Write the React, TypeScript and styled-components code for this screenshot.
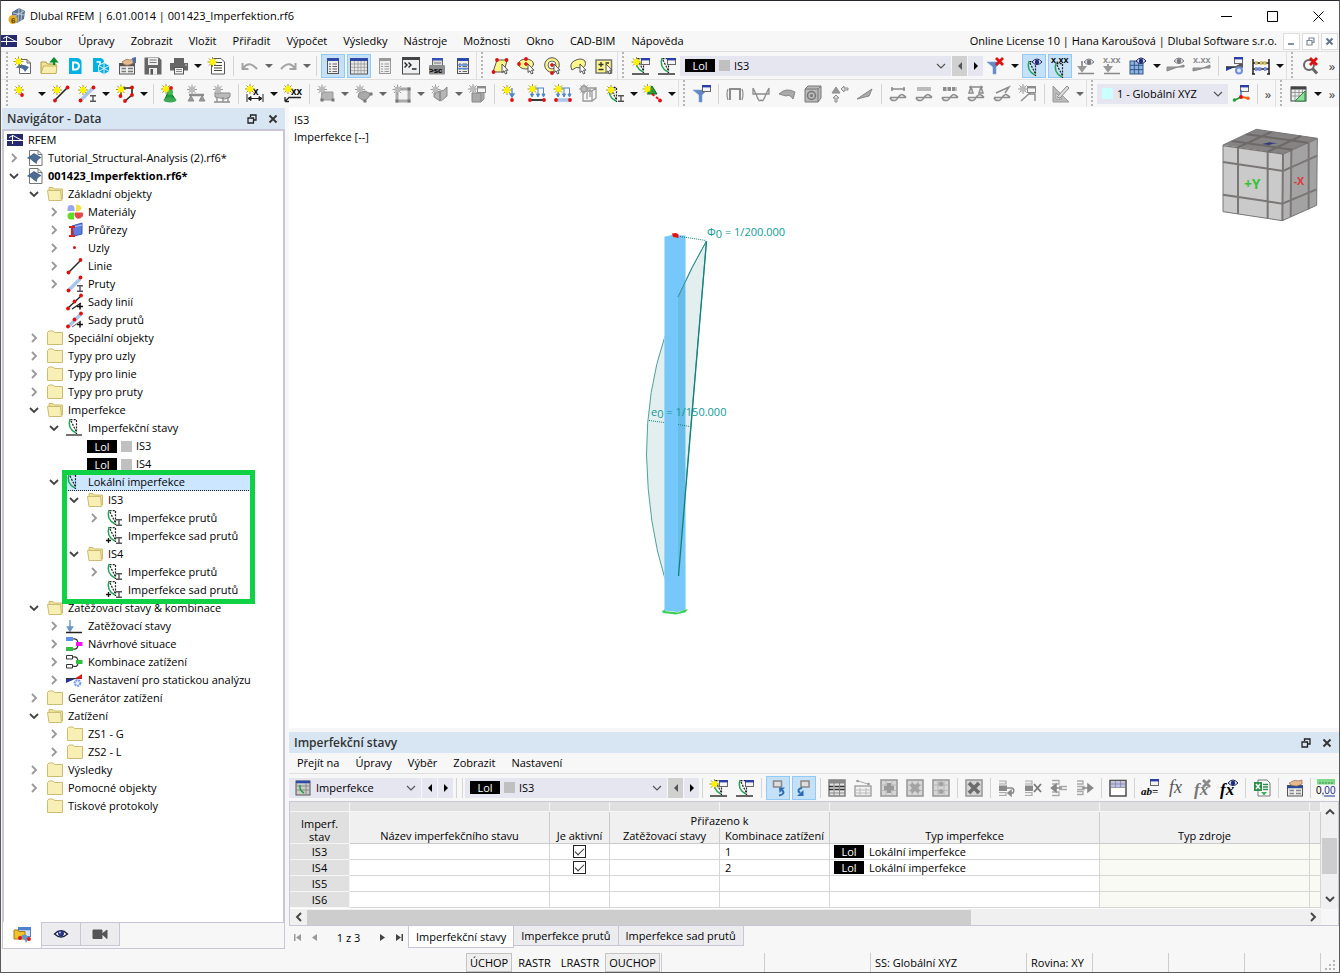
import React from "react";
import styled, { createGlobalStyle, css } from "styled-components";

const Global = createGlobalStyle`
  *, *::before, *::after { box-sizing: border-box; }
  body { margin: 0; }
  body, button, select, input, table { font-family: "Open Sans", "Noto Sans", sans-serif; font-size: 11px; color: #000; }
  button { padding: 0; border: 0; background: none; }
  ul { list-style: none; margin: 0; padding: 0; }
`;

const c = {
  bar: "#f7f7f7",
  line: "#e0e0e0",
  frame: "#c9c7d5",
  field: "#e6e6f1",
  title: "#d8e6f3",
  hot: "#c5e1f8",
  hotLine: "#93c9f5",
  g: "#8c8c8c",
  red: "#e01010",
  yel: "#fff68a",
  lb: "#a9c6ea",
  grn: "#1f9d3a",
};

/* ---------- icon primitives ---------- */

type P = { x?: number; y?: number; g?: boolean };

const Star = ({ x = 5, y = 5, g }: P) => (
  <g transform={`translate(${x} ${y})`}>
    <path d="M-5 0H5M0-5V5M-3.6-3.6L3.6 3.6M-3.6 3.6L3.6-3.6" stroke={g ? "#999" : "#a89a10"} strokeWidth="1" />
    <circle r="3" fill={g ? "#bbb" : "#fff200"} />
  </g>
);
const Dot = ({ x = 0, y = 0, g }: P) => <circle cx={x} cy={y} r="1.9" fill={g ? c.g : c.red} />;
const Win = ({ x = 8, y = 1, g }: P) => (
  <g>
    <rect x={x + 0.5} y={y + 0.5} width="8" height="6" fill="#f4f4f4" stroke={g ? c.g : "#666"} />
    <rect x={x} y={y} width="9" height="2.4" fill={g ? c.g : "#2b3ea8"} />
  </g>
);
const Eye = ({ x = 10, y = 4, g }: P) => (
  <g transform={`translate(${x} ${y})`}>
    <path d="M-5 0Q0-6 5 0Q0 5-5 0Z" fill="#dfe3f2" stroke={g ? "#777" : "#1c2456"} />
    <circle r="2.2" fill={g ? "#777" : "#1c2a80"} />
  </g>
);
const Cursor = ({ x = 11, y = 7 }: P) => (
  <path transform={`translate(${x} ${y})`} d="M0 0V8.500L2 6.800L3.400 10L5 9.200L3.600 6.200H6Z" fill="#fff" stroke="#444" strokeWidth=".9" />
);
const Bow = ({ x = 0, y = 0 }: P) => (
  <g transform={`translate(${x} ${y})`} fill="none">
    <path d="M2 0C0 6 2 11 8 14" stroke="#25a35a" strokeWidth="1.500" />
    <path d="M2.500.700H9M8.500 1V15M3 2L8 12" stroke="#222" strokeWidth="1.200" strokeDasharray="2 1.200" />
  </g>
);
const Beam = ({ x = 11, y = 10 }: P) => (
  <path transform={`translate(${x} ${y})`} d="M0 .7H6M3 1V6.500M0 6.300H6" stroke="#555" strokeWidth="1.400" />
);
const Cross = ({ x = 9, y = 0, g }: P) => (
  <path transform={`translate(${x} ${y})`} d="M1 1L8 8M8 1L1 8" stroke={g ? "#8a8a8a" : c.red} strokeWidth="2.800" />
);
const Sq = ({ x = 0, y = 0 }: P) => <rect x={x - 1.5} y={y - 1.5} width="3" height="3" fill="#777" />;
const Funnel = () => <path d="M0 5H14L9 10V17H6V10Z" fill="#6189c6" stroke="#7fa3d8" strokeWidth=".6" />;
const Sheet = ({ g }: P) => (
  <g>
    <rect x="3.500" y="1.500" width="11" height="15" fill="#eee" stroke={g ? "#999" : "#555"} />
    <rect x="3" y="1" width="12" height="3" fill={g ? "#999" : "#2f49a8"} />
    <path d="M5 7H7M5 9.500H7M5 12H7M5 14.500H7M8.500 7H13M8.500 9.500H13M8.500 12H13M8.500 14.500H13" stroke={g ? "#999" : "#666"} strokeWidth="1.200" />
  </g>
);
const SmallRes = ({ top }: { top: React.ReactNode }) => (
  <g fill="none" stroke={c.g} strokeWidth="1.500">
    {top}
    <path d="M1 12.500H17M1 12.500Q2 16 6 15.500Q8 15 9 12.500Q12 8.500 14 10Q16 11 17 12.500" />
  </g>
);
const GridBox = ({ children }: { children?: React.ReactNode }) => (
  <g>
    <rect x="1" y="1" width="16" height="16" fill="#d6d6d6" stroke="#9a9a9a" strokeWidth="1.600" />
    <path d="M1 6H17M1 11.500H17M6 1V17M12 1V17" stroke="#b0b0b0" strokeWidth=".8" />
    {children}
  </g>
);
const Rows = ({ children }: { children?: React.ReactNode }) => (
  <g>
    <path d="M1 2H8V5H1M1 13.500H8V16.500H1" fill="#eee" stroke="#aaa" strokeWidth="1.200" />
    <rect x="1" y="6.500" width="8" height="5.500" fill="#8a8a8a" />
    {children}
  </g>
);
const Surface = () => <path d="M1.500 9L8 4.500L15 8.500L12.500 10Q10 12 10.500 14.500L7 12Q5 9.500 1.500 9Z" fill="#4b6c95" stroke="#2f4a6d" strokeWidth=".6" />;

const icons: Record<string, React.ReactNode> = {
  app: <g><path d="M4 5L11 1L17 4L16 12L9 16L4 12Z" fill="#5c7391" /><path d="M11 1L10 15M14 2.500L13 14M5 6L16 8M5 10L16 4" stroke="#c7d4e3" strokeWidth=".8" /><circle cx="5" cy="12.500" r="4.500" fill="#e0ad2d" /><text x="3" y="15.500" fontSize="8" fontWeight="700" fill="#604600">6</text></g>,
  rfem: <g><rect x="1" y="3" width="16" height="12" fill="#27296f" /><path d="M1 9.500H17M6.500 4V13M3 6.500L7 4.500L16 9.500" stroke="#fff" strokeWidth="1" fill="none" /></g>,
  newModel: <g><path d="M5.500 2.500H13L16.500 6V16.500H5.500Z" fill="#fff" stroke="#666" /><path d="M13 2.500V6H16.500" fill="none" stroke="#666" /><path d="M2 11Q6 5 15 10L11 15Q9 10 2 11Z" fill="#4b6c95" /><Star x={4.5} y={4.5} /></g>,
  open: <g><path d="M1 16V5H6L7.500 7H16V16Z" fill="#f3e496" stroke="#a99a45" /><path d="M3.500 9H17L16 16.500H1Z" fill="#f8efae" stroke="#b9aa55" strokeWidth=".8" /><path d="M14 8V2M11.500 4.500L14 1.500L16.500 4.500Z" stroke="#0a8d2c" strokeWidth="2" fill="#0a8d2c" /></g>,
  cloudC: <g><path d="M3 1H12Q15.500 2 15.500 5V17H3Z" fill="#00b2e3" /><path d="M12 5.500H9.500A3.500 3.500 0 0 0 9.500 12.500H12Z" fill="none" stroke="#fff" strokeWidth="2" transform="matrix(-1 0 0 1 19 0)" /></g>,
  cloudNet: <g><path d="M1 1H9Q12 2 12 5V15H1Z" fill="#00b2e3" /><path d="M4.500 5H8V9" fill="none" stroke="#fff" strokeWidth="1.600" /><path d="M12 5.500L17.500 8.500V14.500L12 17.500L6.500 14.500V8.500Z" fill="#0fa9dc" stroke="#e9f8fd" strokeWidth=".9" /><path d="M12 5.500V17.500M6.500 8.500L17.500 14.500M17.500 8.500L6.500 14.500" stroke="#e9f8fd" strokeWidth=".9" /></g>,
  hand: <g><rect x="1.500" y="6.500" width="15" height="10.500" fill="#eee" stroke="#555" /><path d="M1 8H17" stroke="#555" strokeWidth="2.500" /><path d="M3.500 11.500H8M3.500 14.500H8M10 11.500H15M10 14.500H15" stroke="#777" strokeWidth="1.500" /><path d="M4 5Q8 1 12 3L16 1.500V6L11 8Q6 9 4 5Z" fill="#e6b98e" stroke="#94694a" strokeWidth=".7" /><path d="M14 1L18 0V6L15 6.500Z" fill="#4d6f9b" /></g>,
  handPanel: <g><rect x="1.500" y="6.500" width="15" height="10.500" fill="#eee" stroke="#555" /><path d="M1 8H17" stroke="#2b4a9a" strokeWidth="2.500" /><path d="M3.500 11.500H8M3.500 14.500H8M10 11.500H15M10 14.500H15" stroke="#888" strokeWidth="1.300" /><path d="M3 4.500Q8 0 12 2L16 1V5L11 7Q6 7.500 3 4.500Z" fill="#e6b98e" stroke="#94694a" strokeWidth=".7" /></g>,
  save: <g><path d="M.500.500H15L17.500 3V17.500H.500Z" fill="#666" /><rect x="4" y="1" width="10" height="7" fill="#eee" /><path d="M5.500 3H12.500M5.500 5.500H12.500" stroke="#777" /><rect x="5" y="11" width="8" height="6.500" fill="#eee" /><rect x="6.500" y="12" width="2.500" height="5.500" fill="#555" /></g>,
  print: <g><rect x="4" y="1" width="10" height="5" fill="#666" /><path d="M0 6H18V13.500H0Z" fill="#666" /><circle cx="16" cy="8" r=".8" fill="#eee" /><rect x="4.500" y="10.500" width="9" height="6.500" fill="#f3f3f3" stroke="#555" /><path d="M6 12.500H12M6 14.500H12" stroke="#888" /></g>,
  report: <g><path d="M5.500 1.500H13L16.500 5V17H3.500V6" fill="#fff" stroke="#555" /><path d="M8 5.500H14M6 8.500H14M6 11H14M6 13.500H14" stroke="#444" strokeWidth="1.200" /><Star x={4.5} y={5} /></g>,
  undo: <path d="M1.500 6V12H7.500M2.500 11Q8 3 16 12" fill="none" stroke="#a3a3a3" strokeWidth="2" />,
  redo: <path d="M16.500 6V12H10.500M15.500 11Q10 3 2 12" fill="none" stroke="#a3a3a3" strokeWidth="2" />,
  list: <Sheet />,
  listGrey: <Sheet g />,
  grid: <g><rect x=".500" y="1.500" width="17" height="15.500" fill="#e8e8e8" stroke="#555" /><rect y="1" width="18" height="3" fill="#2f49a8" /><path d="M1 7H17M1 10.300H17M1 13.600H17M4.500 4V17M8 4V17M11 4V17M14.300 4V17" stroke="#999" strokeWidth=".8" /></g>,
  console: <g><rect x=".500" y=".500" width="17" height="16.500" fill="#eef0f2" stroke="#444" /><path d="M0 1.500H18" stroke="#444" strokeWidth="3" /><path d="M2.500 5.500L5 8L2.500 10.500M6.500 5.500L9 8L6.500 10.500M10 12H14.500" fill="none" stroke="#222" strokeWidth="1.400" /></g>,
  script: <g><rect x="4.500" y="1.500" width="10" height="9" fill="#ddd" stroke="#666" /><rect x="4" y="1" width="11" height="2.500" fill="#3951b5" /><path d="M6 6H13" stroke="#777" /><rect x="1" y="8" width="16" height="9.500" rx="1" fill="#8e8e8e" /><text x="1" y="16" fontSize="8" fontWeight="700" fill="#000">&gt;sc</text></g>,
  listBlue: <g><Sheet /><path d="M4 8H14M4 11.500H14" stroke="#5a87d6" strokeWidth="1.500" /></g>,
  selPoly: <g><path d="M2 15L6 3H16L13 15Z" fill={c.yel} stroke="#555" /><Dot x={2.5} y={15} /><Dot x={6} y={3} /><Dot x={15.500} y={3} /><Cursor /></g>,
  selEll: <g><ellipse cx="9" cy="7" rx="7.500" ry="5" fill={c.yel} stroke="#555" /><Dot x={9} y={2} /><Dot x={2} y={7} /><path d="M7 7H11M9 5V9" stroke={c.red} strokeWidth="1.500" /><Cursor /></g>,
  selRing: <g><circle cx="9" cy="8" r="7.300" fill={c.yel} stroke="#555" /><circle cx="9" cy="8" r="4" fill="#f6f6f6" stroke="#666" /><path d="M7 8H11M9 6V10" stroke={c.red} strokeWidth="1.600" /><Dot x={9} y={16} /><Cursor /></g>,
  selLasso: <g><path d="M3 13Q0 7 5 4Q12 0 16 4Q18 10 12 11Q7 9 3 13Z" fill={c.yel} stroke="#555" /><Cursor /></g>,
  selPm: <g><rect x="1" y="3" width="15.500" height="13" fill={c.yel} stroke="#777" strokeWidth="1.500" /><path d="M3.500 7.500H8.500M6 5V10M3.500 12.500H8.500M10.500 6H14" stroke="#333" strokeWidth="1.300" /><Cursor /></g>,
  impNew: <g><Bow x={3} y={1} /><path d="M0 17H17" stroke="#333" strokeWidth="1.500" /><Win x={9} y={1} /><Star x={4.500} y={5} /></g>,
  impEdit: <g><Bow x={2} y={1} /><path d="M0 17H17" stroke="#333" strokeWidth="1.500" /><Win x={9} y={1} /></g>,
  filterX: <g><Funnel /><Cross x={8} y={0} /></g>,
  impEye: <g><Bow x={2} y={4} /><Eye x={12} y={5} /></g>,
  impX: <g><Bow x={3} y={6} /><text x="0" y="6" fontSize="9" fontWeight="700">x.xx</text></g>,
  loadEye: <g><path d="M5 4V13M2 10L5 14L8 10Z" stroke="#999" strokeWidth="2" fill="#999" /><path d="M1 16.500H17" stroke="#888" strokeWidth="1.500" /><Eye x={12} y={5} g /></g>,
  loadX: <g><path d="M5 7V13M2 10L5 14L8 10Z" stroke="#999" strokeWidth="2" fill="#999" /><path d="M1 16.500H17" stroke="#888" strokeWidth="1.500" /><text x="0" y="6" fontSize="9" fontWeight="700" fill="#888">x.xx</text></g>,
  gridEye: <g><rect x="1" y="4" width="13" height="13" fill="#8fb2de" stroke="#33588c" /><path d="M1 8.300H14M1 12.600H14M5.300 4V17M9.700 4V17" stroke="#33588c" /><Eye x={12} y={4} /></g>,
  resEye: <g><path d="M0 14V10H17V8L8 11Z" fill="#999" stroke="#888" /><Eye x={12} y={4} g /></g>,
  resX: <g><path d="M0 14V11H17V8L8 12Z" fill="#999" stroke="#888" /><text x="0" y="6" fontSize="9" fontWeight="700" fill="#888">x.xx</text></g>,
  calc: <g><path d="M0 14V10H9Z" fill="#2b3ea8" /><path d="M0 10H17" stroke="#333" strokeWidth="1.500" /><path d="M10 9L17 5V9Z" fill="#555" /><Win x={8} y={0} /><circle cx="13" cy="13.500" r="3" fill="#dfe8ff" stroke="#6f8fe0" strokeWidth="2" /></g>,
  abacus: <g><path d="M1 2V17M17 2V17M1 6H17M1 12H17M0 17H3M15 17H18" stroke="#222" strokeWidth="1.500" /><path d="M3 6H6M8 6H15" stroke="#d6c46a" strokeWidth="4" strokeDasharray="2.500 .800" /><path d="M3 12H10M12 12H15" stroke="#7c93e0" strokeWidth="4" strokeDasharray="2.500 .800" /></g>,
  zoomX: <g><circle cx="8" cy="8" r="5" fill="#f5f5f5" stroke="#666" strokeWidth="2" /><path d="M11.500 11.500L16 16.500" stroke="#666" strokeWidth="3" /><Cross x={8} y={0} /></g>,
  node: <g><Star x={5} y={5} /><Dot x={8} y={10} /></g>,
  line: <g><path d="M3 15L15 3" stroke="#222" strokeWidth="1.600" /><Dot x={3} y={15.500} /><Dot x={15.500} y={2.500} /><Star x={5} y={5} /></g>,
  member: <g><path d="M3 15L15 3" stroke={c.lb} strokeWidth="3.500" /><Dot x={2.500} y={15.500} /><Dot x={15.500} y={2.500} /><Star x={5} y={5} /><Beam x={12} y={10} /></g>,
  poly: <g><path d="M5 11V3H16V10L9 16" stroke="#222" strokeWidth="1.600" fill="none" /><Dot x={16} y={2.500} /><Dot x={16} y={10} /><Dot x={9} y={16} /><Dot x={4.500} y={11} /><Star x={5} y={4.500} /></g>,
  support: <g><path d="M8 5L14 14H4Z" fill={c.grn} stroke="#0c6e22" /><ellipse cx="9" cy="15" rx="6.500" ry="2.500" fill="#3da856" /><circle cx="9" cy="7" r="3" fill="#3cba54" /><Star x={5} y={4} /><Dot x={10} y={3} /></g>,
  supp2: <g><path d="M2 10H17" stroke={c.g} strokeWidth="2.500" /><path d="M4 11L7 16H1ZM15 11L18 16H12Z" fill="#999" stroke={c.g} /><Star x={5} y={4.500} g /></g>,
  supp3: <g><path d="M2 8H17V12L12 14L2 12Z" fill="#bbb" stroke={c.g} /><path d="M4 12V17M10 12V17M15 12V17M1 17H17" stroke={c.g} strokeWidth="1.300" /><Star x={5} y={4.500} g /></g>,
  dimX: <g><path d="M1 9V17M17 9V17M2 13.500H16M2 13.500L5 11.500V15.500ZM16 13.500L13 11.500V15.500Z" stroke="#222" fill="#222" /><text x="7" y="10" fontSize="10" fontWeight="700">x</text><Star x={4} y={4} /></g>,
  dimXX: <g><path d="M1 16.500L5 12.500H17M1 16.500V12M1 16.500H5" stroke="#222" fill="none" strokeWidth="1.300" /><text x="7" y="10" fontSize="10" fontWeight="700">xx</text><Star x={4} y={4} /></g>,
  surf: <g><path d="M5 7H16V15H4Z" fill="#b5b5b5" stroke="#999" /><Sq x={5} y={15} /><Sq x={16} y={15} /><Star x={5} y={4.500} g /></g>,
  surf2: <g><path d="M4 8L10 6L16 9L13 13L9 16L3 12Z" fill="#aaa" stroke="#888" /><Sq x={10} y={16} /><Sq x={16} y={9} /><Star x={5} y={4.500} g /></g>,
  opening: <g><rect x="4" y="4" width="12" height="12" fill="#f3f3f3" stroke="#aaa" strokeWidth="3" /><Sq x={4} y={16} /><Sq x={16} y={16} /><Sq x={16} y={4} /><Star x={4.500} y={4.500} g /></g>,
  wing: <g><path d="M3 8L9 6V16L3 12ZM9 6Q12 7 16 2V11Q12 15 9 16Z" fill="#b5b5b5" stroke="#888" /><Star x={4.500} y={4.500} g /></g>,
  solid: <g><path d="M3 8H12V17H3ZM12 8L15 5V14L12 17" fill="#aaa" stroke="#888" /><Win x={8} y={1} g /><Star x={4} y={4} g /></g>,
  nodeLoad: <g><path d="M10 3V11M8 9L10 12L12 9Z" stroke="#4f86cf" fill="#4f86cf" strokeWidth="1.300" /><Dot x={10} y={15} /><Star x={5} y={5} /></g>,
  lineLoad: <g><path d="M4 3H16M4 3V11M10 3V11M15.500 3V11M2.500 9L4 12L5.500 9ZM8.500 9L10 12L11.500 9ZM14 9L15.500 12L17 9Z" stroke="#4f86cf" fill="#4f86cf" /><path d="M2 15H16" stroke="#222" strokeWidth="1.800" /><Dot x={2} y={15} /><Dot x={16} y={15} /><Star x={4.500} y={4} /></g>,
  memLoad: <g><path d="M4 3H16M4 3V11M10 3V11M15.500 3V11M2.500 9L4 12L5.500 9ZM8.500 9L10 12L11.500 9ZM14 9L15.500 12L17 9Z" stroke="#4f86cf" fill="#4f86cf" /><path d="M2 15H16" stroke={c.lb} strokeWidth="3.500" /><Dot x={2} y={15} /><Dot x={16} y={15} /><Star x={4.500} y={4} /></g>,
  solidLoad: <g fill="none" stroke="#999" strokeWidth="1.300"><path d="M3 6H12V16H3ZM12 6L16 3V13L12 16M7 3H16M7 8V14M10 4V12" /><Star x={4} y={4} g /></g>,
  imp: <g><Bow x={2} y={2} /><Beam x={12} y={10} /><Star x={5} y={5} /></g>,
  nodeSup: <g><path d="M8 1L13 9H3Z" fill={c.grn} stroke="#0c6e22" /><Star x={3.500} y={4} /><path d="M8 9L16 15" stroke="#e01010" strokeWidth="2" strokeDasharray="3 2" /><Dot x={16} y={15.500} /></g>,
  filterWin: <g><Funnel /><Win x={9} y={0} /></g>,
  rDef: <g fill="none" stroke={c.g} strokeWidth="1.600"><path d="M4 15V4H14V15M3 4H15" strokeWidth="2" /><path d="M2 4Q0 9 2 15M16 4Q18 9 16 15" strokeWidth="1.200" /></g>,
  rMom: <path d="M1 3L4 9H14L17 3M1 3V9H4Q7 18 9 15Q11 18 14 9H17V3" fill="none" stroke={c.g} strokeWidth="1.300" />,
  rSurf: <path d="M1 9Q8 2 17 7L15 14Q12 9 8 11Z" fill="#aaa" stroke="#888" />,
  rSol: <g><path d="M1 4L4 1H17V13L14 17H1Z" fill="#b9b9b9" stroke="#777" /><path d="M1 4H14V17M14 4L17 1" stroke="#777" fill="none" /><circle cx="7.500" cy="10.500" r="4" fill="none" stroke="#777" strokeWidth="1.500" /><circle cx="7.500" cy="10.500" r="1.500" fill="#777" /></g>,
  rSup: <g fill="#999" stroke={c.g}><path d="M6 2L10 8H2Z" /><path d="M18 5H14V7L11 4L14 1V3H18ZM5 17V13H3L6 10L9 13H7V17Z" fill="#ddd" /></g>,
  rSec: <path d="M1 14L16 4L13 11L1 14Z" fill="#aaa" stroke="#888" />,
  r1: <SmallRes top={<path d="M2 4H16M3 2V6M15 2V6" />} />,
  r2: <SmallRes top={<path d="M2 4H16" strokeWidth="4" stroke="#bbb" />} />,
  r3: <SmallRes top={<path d="M2 4H16" strokeWidth="4" strokeDasharray="3.500 1" />} />,
  r4: <SmallRes top={<path d="M2 2H16M4 2L6 8H2ZM14 2L16 8H12Z" />} />,
  r5: <SmallRes top={<path d="M3 8L16 2L12 8" />} />,
  rNew: <g><path d="M2 16L12 7M9 9H16V16" stroke={c.g} fill="none" strokeWidth="1.400" /><Win x={8} y={1} g /><Star x={4} y={4} g /></g>,
  edit: <g><path d="M1 1V17H17ZM4 8V14H10Z" fill="#bbb" stroke="#999" fillRule="evenodd" /><path d="M5 12L15 1L17 3L8 13Z" fill="#ddd" stroke="#888" /></g>,
  axes: <g><Win x={8} y={0} /><path d="M9 5V12" stroke="#3167c9" strokeWidth="1.300" fill="none" /><path d="M9 12L3 15" stroke="#19a23a" strokeWidth="1.800" /><path d="M9 12L16 13" stroke="#f06010" strokeWidth="1.800" /><Dot x={9} y={12} /><circle cx="2.500" cy="15" r="1.800" fill="#19a23a" /><circle cx="16" cy="13.300" r="1.800" fill="#f06010" /></g>,
  gridRuler: <g><rect x="1" y="2" width="15" height="14" fill="#eee" stroke="#444" /><path d="M1 3H16" stroke="#444" strokeWidth="3" /><path d="M1 7.500H16M1 11H16M5 4V16M9 4V16M12.500 4V16" stroke="#888" strokeWidth=".8" /><path d="M15 6V16H5Z" fill="#8ee09a" stroke="#28803a" /></g>,
  /* table toolbar */
  tabIcon: <g><rect x="2" y="2" width="14" height="14" fill="#ccc" stroke="#555" /><path d="M2 3H16" stroke="#2f49a8" strokeWidth="2.500" /><path d="M2 7H16M2 11H16M12 4V16" stroke="#888" /><path d="M6 6Q5 11 10 14" stroke={c.grn} strokeWidth="1.500" fill="none" /></g>,
  syncA: <g><rect x="4.500" y="2" width="8" height="6" fill="#ddd" stroke="#888" strokeWidth="1.500" /><path d="M10 16.500Q17 15 13 11" fill="none" stroke="#2c6cb3" strokeWidth="2" /><path d="M10 8.500H16L10.500 14Z" fill="#2c6cb3" /></g>,
  syncB: <g><rect x="6" y="2" width="8" height="6" fill="#ddd" stroke="#888" strokeWidth="1.500" /><path d="M7 9Q1 10 5 14" fill="none" stroke="#2c6cb3" strokeWidth="2" /><path d="M2 17H8.500V11Z" fill="#2c6cb3" /></g>,
  tRows: <g><rect x="1" y="1" width="16" height="16" fill="#e4e4e4" stroke="#777" strokeWidth="1.400" /><rect x="1" y="1" width="16" height="3.500" fill="#888" /><path d="M1 7.500H17M1 10.500H17" stroke="#333" strokeWidth="1.600" strokeDasharray="4.500 1" /><path d="M1 14H17M6 4V17M11.500 4V17" stroke="#888" /></g>,
  tLine: <g><path d="M4 2L14 5" stroke="#aaa" /><circle cx="3.500" cy="2" r="1.300" fill="#999" /><circle cx="14.500" cy="5" r="1.300" fill="#999" /><rect x="1" y="7" width="16" height="10" fill="#f0f0f0" stroke="#999" strokeWidth="1.300" /><path d="M1 11H17M1 14H17M6 9V17M12 9V17" stroke="#bbb" /></g>,
  tPlus: <GridBox><path d="M9 4V14M4 9H14" stroke="#999" strokeWidth="4" /></GridBox>,
  tStar: <GridBox><path d="M5 5L13 13M13 5L5 13" stroke="#a3a3a3" strokeWidth="4" /></GridBox>,
  tDots: <GridBox><circle cx="9" cy="5" r="2.500" fill="#a3a3a3" /><circle cx="9" cy="12.500" r="2.500" fill="#a3a3a3" /></GridBox>,
  tDel: <GridBox><path d="M4 4L14 14M14 4L4 14" stroke="#6c6c6c" strokeWidth="3.500" /></GridBox>,
  rowA: <Rows><path d="M9 9H14Q17 10 15 14H11M13 11.500L10 14L13 16.500Z" stroke="#8a8a8a" strokeWidth="1.600" fill="none" /></Rows>,
  rowX: <Rows><path d="M10 5L17 13M17 5L10 13" stroke="#777" strokeWidth="1.800" /></Rows>,
  rowL: <g><path d="M2 1.500H9V5H2M2 13H9V16.500H2M9 7.500H17M9 10.500H17" stroke="#aaa" fill="none" strokeWidth="1.300" /><path d="M2 9H12M6 5.500L1.500 9L6 12.500Z" fill="#888" stroke="#888" strokeWidth="1.600" /></g>,
  rowR: <g><path d="M1 2H7V5H1M1 12.500H7V15.500H1M1 7.500H8V10.500H1" stroke="#aaa" fill="none" strokeWidth="1.300" /><path d="M6 9H15M12 5.500L16.500 9L12 12.500Z" fill="#888" stroke="#888" strokeWidth="1.600" /></g>,
  tView: <g><rect x="1" y="1.500" width="16" height="15.500" fill="#fff" stroke="#555" strokeWidth="1.600" /><rect x="2" y="2.500" width="14" height="6" fill="#bfbfee" /><path d="M2 8.500H16M2 5H16M6.500 2V8M11.500 2V8" stroke="#888" strokeWidth=".8" /></g>,
  abEq: <g><Win x={8} y={0} /><text x="-1" y="16" fontSize="11" fontStyle="italic" fontWeight="700" fontFamily="Liberation Serif">ab=</text></g>,
  fx: <text x="1" y="14" fontSize="18" fontStyle="italic" fill="#555" fontFamily="Liberation Serif">fx</text>,
  fxX: <g><text x="0" y="16" fontSize="17" fontStyle="italic" fill="#777" fontWeight="700" fontFamily="Liberation Serif">fx</text><Cross x={8} y={0} g /></g>,
  fxEye: <g><text x="0" y="16" fontSize="17" fontStyle="italic" fontWeight="700" fontFamily="Liberation Serif">fx</text><Eye x={13} y={4} /></g>,
  excel: <g><path d="M5 1H14L17 4V17H5Z" fill="#fff" stroke="#777" /><rect x="1" y="3" width="8" height="9" fill="#2e8f4d" /><path d="M3 5L7 10M7 5L3 10" stroke="#fff" strokeWidth="1.300" /><path d="M10 5.500H15M10 8H15M10 10.500H15" stroke="#2e8f4d" strokeWidth="1.400" /><path d="M8 13H14L11 16.500Z" fill="#3fae5e" /></g>,
  decimals: <g><rect x="0" y="0" width="18" height="5.500" fill="#7fd98b" /><path d="M3 5V3M6 5V3M9 5V3M12 5V3M15 5V3" stroke="#3a8d48" /><text x="-1" y="15" fontSize="10">0,<tspan fill="#1b2f8f">00</tspan></text><path d="M7 17H18" stroke="#1b2f8f" /></g>,
  /* tree */
  model: <g><path d="M3.500 1.500H12L16 5.500V16.500H3.500Z" fill="#fff" stroke="#777" /><path d="M12 1.500V5.500H16" fill="none" stroke="#777" /><Surface /></g>,
  folder: <path d="M1.500 15.500V3.500L3 2H7L8.500 3.500H16.500V15.500Z" fill="#f8efb4" stroke="#cbbd73" />,
  folderOpen: <g><path d="M3 14V2.500H7L8.500 4H16.500V14Z" fill="#efe093" stroke="#cbbd73" /><path d="M1.500 5.500H14.500L15.500 15.500H3Z" fill="#f8efb4" stroke="#cbbd73" /></g>,
  materials: <g><path d="M1.500 6A3.500 4 0 0 1 8.500 6V8H1.500Z" fill="#9aa6ea" /><path d="M10 1.500A5.500 3.500 0 0 1 10 8.500Z" fill="#efe14f" /><path d="M8 9.500H5A3.500 3.500 0 0 0 5 16.500H8Z" fill="#5fdc24" /><path d="M9 10H16.500A3.700 4 0 0 1 9 12Z" stroke="#e44848" fill="#e44848" /></g>,
  sections: <g><path d="M6 5L16 2V13L8 15Z" fill="#5f7fe0" stroke="#3b57b5" /><path d="M7 6L16 4" stroke="#b4c4f5" /><path d="M3 6H9M6 6V15M3 15H9" stroke="#d82020" strokeWidth="2.200" /></g>,
  nodes: <circle cx="8.500" cy="8.500" r="1.500" fill={c.red} />,
  lines: <g><path d="M3 15L14 4" stroke="#222" strokeWidth="1.500" /><Dot x={2.500} y={15.500} /><Dot x={14.500} y={3} /></g>,
  members: <g><path d="M3 15L14 4" stroke={c.lb} strokeWidth="3.500" /><Dot x={2.500} y={15.500} /><Dot x={14.500} y={2.500} /><Beam x={11} y={10} /></g>,
  lineSets: <g><path d="M2 15L15 3M6 16L15 10" stroke="#222" strokeWidth="1.300" /><Dot x={2} y={15.500} /><Dot x={8.500} y={8.500} /><Dot x={15} y={2.500} /><path d="M11 13.500H17M14 10.500V16.500" stroke="#111" strokeWidth="1.500" /></g>,
  memSets: <g><path d="M3 15L15 3" stroke={c.lb} strokeWidth="3.500" /><path d="M6 16L15 10" stroke="#555" /><Dot x={2} y={15.500} /><Dot x={8.500} y={8.500} /><Dot x={15} y={2.500} /><path d="M11 13.500H17M14 10.500V16.500" stroke="#111" strokeWidth="1.500" /></g>,
  impCase: <g><Bow x={2} y={0} /><path d="M0 16H16" stroke="#444" strokeWidth="1.500" /></g>,
  impLocal: <Bow x={1} y={1} />,
  impMember: <g><Bow x={1} y={1} /><Beam x={10} y={10} /></g>,
  impSet: <g><Bow x={1} y={0} /><Beam x={10} y={10} /><path d="M0 13.500H5M2.500 11V16" stroke="#111" strokeWidth="1.300" /></g>,
  loadCase: <g><path d="M4 3V12M1.500 10L4 14L6.500 10Z" stroke="#6f95c7" strokeWidth="1.500" fill="#6f95c7" /><path d="M0 15.500H16" stroke="#222" strokeWidth="1.500" /></g>,
  situations: <g><rect x="0" y="2" width="7" height="4" fill="#5f8ff0" /><rect x="0" y="12" width="7" height="4" fill="#2fbe3e" /><path d="M7 4Q12 3 12 9Q12 15 7 14" fill="none" stroke="#333" strokeWidth="1.200" /><rect x="10" y="7" width="6.500" height="4" fill="#f412ea" /></g>,
  combos: <g><path d="M.500 2.500H6.500V6H.500ZM.500 11.500H6.500V15H.500Z" fill="#fff" stroke="#333" /><path d="M7 4Q12 3 12 9Q12 15 7 13" fill="none" stroke="#333" strokeWidth="1.200" /><rect x="10" y="7" width="6.500" height="4" fill="#2fbe3e" /></g>,
  settings: <g><path d="M0 12V8H9Z" fill="#24349c" /><path d="M0 7.500H16" stroke="#333" /><path d="M9 7.500L16 3V8Z" fill="#e01818" /><circle cx="11.500" cy="12" r="2.800" fill="#e9f0ff" stroke="#7b9cec" strokeWidth="2.200" strokeDasharray="2 .700" /></g>,
  navData: <g><rect x="5.500" y="1.500" width="12" height="9" fill="#cfe0f7" stroke="#4f7fd0" /><path d="M5 3H18" stroke="#4f7fd0" strokeWidth="2.500" /><path d="M1 13V4H5L6 5.500H12V13Z" fill="#f2c22c" stroke="#a87d10" /><path d="M6 12Q12 5 16 12L13 17Q12 12 6 12Z" fill="#6d93c2" /><Dot x={7} y={12} /><Dot x={16} y={13} /></g>,
  eye: <g><path d="M2.500 9Q9 2.500 15.500 9Q9 15 2.500 9Z" fill="#fff" stroke="#1c2040" strokeWidth="1.300" /><circle cx="9" cy="8.500" r="3" fill="#26357f" /><circle cx="8" cy="7.500" r="1" fill="#b6c4f5" /></g>,
  camera: <path d="M2 5H11V13.500H2ZM11 9L16 5V13.500Z" fill="#555" stroke="#555" strokeLinejoin="round" />,
};

const Svg = styled.svg`
  display: block;
  flex: none;
  width: 18px;
  height: 18px;
  overflow: visible;
`;
const Icon = ({ name }: { name: string }) => (
  <Svg viewBox="0 0 18 18" aria-hidden="true" fontFamily="Liberation Sans">{icons[name]}</Svg>
);

/* ---------- window frame ---------- */

const Window = styled.div`
  display: flex;
  flex-direction: column;
  min-height: 100vh;
  background: ${c.bar};
  border: 1px solid #5a5a5a;
  border-top-color: #28252d;
`;
const TitleBar = styled.header`
  display: flex;
  align-items: center;
  height: 30px;
  padding-left: 7px;
  gap: 4px;
  background: #fff;
  h1 { margin: 0; line-height: 28px; font-size: 11px; font-weight: 400; flex: 1; }
`;
const WinBtn = styled.button`
  flex: none;
  width: 42px;
  height: 29px;
  display: grid;
  place-items: center;
  svg { width: 11px; height: 11px; display: block; }
`;
const MenuBar = styled.nav`
  display: flex;
  align-items: center;
  height: 21px;
  border-bottom: 1px solid ${c.line};
`;
const MenuLogo = styled.span`
  width: 16px;
  display: flex;
  justify-content: center;
`;
const MenuItem = styled.button`
  height: 20px;
  padding: 0 8px;
  line-height: 18px;
  white-space: nowrap;
`;
const License = styled.span`
  margin-left: auto;
  padding-right: 5px;
  line-height: 18px;
  white-space: nowrap;
`;
const MdiBtn = styled.button`
  width: 17px;
  height: 17px;
  margin: 0 1px;
  display: grid;
  place-items: center;
  background: #fff;
  border: 1px solid #ddd;
  svg { width: 9px; height: 9px; display: block; }
`;

const Toolbar = styled.div<{ $last?: boolean }>`
  display: flex;
  align-items: center;
  height: ${(p) => (p.$last ? 27 : 28)}px;
  border-bottom: ${(p) => (p.$last ? "0" : `1px solid ${c.line}`)};
  overflow: hidden;
`;
const ToolBtn = styled.button<{ $on?: boolean }>`
  flex: none;
  display: grid;
  place-items: center;
  width: 24px;
  height: 24px;
  margin: 0 1px;
  ${(p) => p.$on && css`
    background: ${c.hot};
    border: 1px solid ${c.hotLine};
  `}
`;
const DropBtn = styled.button<{ $grey?: boolean }>`
  flex: none;
  width: 12px;
  height: 24px;
  display: grid;
  place-items: center;
  &::after {
    content: "";
    border: 4px solid transparent;
    border-top-color: ${(p) => (p.$grey ? "#666" : "#111")};
    border-bottom: 0;
  }
`;
const Sep = styled.span<{ $tight?: boolean }>`
  flex: none;
  width: ${(p) => (p.$tight ? 5 : 7)}px;
  height: 20px;
  background: linear-gradient(#d4d4d4, #d4d4d4) center / 1px 100% no-repeat;
`;
const Grip = styled.span<{ $first?: boolean }>`
  flex: none;
  width: ${(p) => (p.$first ? 9 : 11)}px;
  height: 28px;
  border-left: 1px solid ${(p) => (p.$first ? "transparent" : c.line)};
  background: radial-gradient(circle at 1px 1px, #b5b5b5 1px, transparent 1px) 4px 4px / 3px 4px repeat-y;
`;
const Overflow = styled.button<{ $end?: boolean }>`
  flex: none;
  width: 14px;
  height: 24px;
  line-height: 22px;
  margin-left: ${(p) => (p.$end ? "auto" : 0)};
  font-size: 13px;
  color: #444;
`;

const ComboBox = styled.div<{ $w: number }>`
  position: relative;
  flex: none;
  display: flex;
  align-items: center;
  width: ${(p) => p.$w}px;
  height: 20px;
  padding: 0 5px;
  gap: 4px;
  background: ${c.field};
  select {
    flex: 1;
    min-width: 0;
    height: 20px;
    padding: 0;
    border: 0;
    background: none;
    appearance: none;
  }
  > svg:last-child { width: 10px; height: 10px; }
`;
const Tag = styled.span`
  flex: none;
  width: 30px;
  height: 13px;
  line-height: 13px;
  text-align: center;
  background: #000;
  color: #fff;
`;
const Swatch = styled.span<{ $color?: string }>`
  flex: none;
  width: 11px;
  height: 11px;
  background: ${(p) => p.$color ?? "#c0c0c0"};
`;
const StepBtn = styled.button<{ $dim?: boolean }>`
  flex: none;
  width: 15px;
  height: 20px;
  margin-left: 1px;
  display: grid;
  place-items: center;
  background: ${(p) => (p.$dim ? "#d0d0d0" : c.field)};
  svg { width: 8px; height: 8px; fill: ${(p) => (p.$dim ? "#555" : "#000")}; }
`;
const Chevron = () => (
  <svg viewBox="0 0 10 10" aria-hidden="true"><path d="M1 3L5 7L9 3" fill="none" stroke="#555" strokeWidth="1.200" /></svg>
);
const Tri = ({ back }: { back?: boolean }) => (
  <svg viewBox="0 0 8 8" aria-hidden="true"><path d={back ? "M6 0V8L2 4Z" : "M2 0V8L6 4Z"} /></svg>
);

/* "|" separator, "v" menu arrow, "w" dim menu arrow, "#" group grip, ">" overflow, "!" pressed button */
const Tools = ({ items }: { items: string }) => (
  <>
    {items.split(" ").map((t, i) => {
      if (t === "|") return <Sep key={i} />;
      if (t === "v") return <DropBtn key={i} aria-label="Další možnosti" />;
      if (t === "w") return <DropBtn key={i} $grey aria-label="Další možnosti" />;
      if (t === "#") return <Grip key={i} />;
      if (t === ">") return <Overflow key={i} aria-label="Více">»</Overflow>;
      const on = t[0] === "!";
      const name = on ? t.slice(1) : t;
      return <ToolBtn key={i} $on={on} aria-label={name} aria-pressed={on}><Icon name={name} /></ToolBtn>;
    })}
  </>
);

/* ---------- panels ---------- */

const Main = styled.main`
  flex: 1;
  display: grid;
  grid-template-columns: 284px minmax(0, 1fr);
  column-gap: 4px;
  min-height: 0;
`;
const Dock = styled.aside`
  display: flex;
  flex-direction: column;
  padding: 1px 0 0 1px;
`;
const PanelTitle = styled.div`
  display: flex;
  align-items: center;
  height: 21px;
  padding: 0 2px 0 5px;
  background: ${c.title};
  h2 { margin: 0; flex: 1; font-size: 12px; line-height: 20px; font-weight: 600; color: #333; }
  button { width: 21px; height: 20px; display: grid; place-items: center; }
  svg { width: 10px; height: 10px; display: block; }
`;
const PanelButtons = () => (
  <>
    <button aria-label="Plovoucí okno"><svg viewBox="0 0 10 10"><path d="M3.500 3V1H9V6H7M1 4H6.500V9H1Z" fill="none" stroke="#222" strokeWidth="1.300" /></svg></button>
    <button aria-label="Zavřít panel"><svg viewBox="0 0 10 10"><path d="M1.500 1.500L8.500 8.500M8.500 1.500L1.500 8.500" stroke="#333" strokeWidth="1.900" /></svg></button>
  </>
);
const TreeBox = styled.div`
  flex: 1;
  background: #fff;
  border: 2px solid ${c.frame};
  border-bottom: 0;
`;
const Row = styled.div<{ $level: number }>`
  display: flex;
  align-items: center;
  height: 18px;
  padding-left: ${(p) => Math.max(0, p.$level * 20 - 20)}px;
`;
const Toggle = styled.button`
  flex: none;
  width: 20px;
  height: 18px;
  display: grid;
  place-items: center;
  svg { width: 10px; height: 10px; }
`;
const Label = styled.span<{ $bold?: boolean; $sel?: boolean; $child?: boolean }>`
  display: flex;
  align-items: center;
  gap: 4px;
  height: 18px;
  padding-left: ${(p) => (p.$child ? 3 : 2)}px;
  line-height: 16px;
  white-space: nowrap;
  font-weight: ${(p) => (p.$bold ? 700 : 400)};
  ${(p) => p.$sel && css`
    width: 187px;
    background: #cce6ff;
    border-bottom: 1px dotted #222;
  `}
`;
const Marked = styled.li`
  position: relative;
  &::after {
    content: "";
    position: absolute;
    z-index: 1;
    left: 58px;
    top: -3px;
    width: 193px;
    height: 134px;
    border: 5px solid #0fd145;
    pointer-events: none;
  }
`;

type Node = { t: string; i?: string; o?: boolean; k?: Node[]; x?: boolean; bold?: boolean; tag?: boolean; sel?: boolean };
const F = (t: string, x = true): Node => ({ t, i: "folder", x });
const leaf = (t: string, i: string, x = false): Node => ({ t, i, x });
const impGroup = (t: string): Node => ({ t, i: "folderOpen", o: true, k: [leaf("Imperfekce prutů", "impMember", true), leaf("Imperfekce sad prutů", "impSet")] });

const tree: Node[] = [
  { t: "Tutorial_Structural-Analysis (2).rf6*", i: "model", x: true },
  {
    t: "001423_Imperfektion.rf6*", i: "model", o: true, bold: true, k: [
      { t: "Základní objekty", i: "folderOpen", o: true, k: [
        leaf("Materiály", "materials", true), leaf("Průřezy", "sections", true), leaf("Uzly", "nodes", true),
        leaf("Linie", "lines", true), leaf("Pruty", "members", true), leaf("Sady linií", "lineSets"), leaf("Sady prutů", "memSets"),
      ] },
      F("Speciální objekty"), F("Typy pro uzly"), F("Typy pro linie"), F("Typy pro pruty"),
      { t: "Imperfekce", i: "folderOpen", o: true, k: [
        { t: "Imperfekční stavy", i: "impCase", o: true, k: [{ t: "IS3", tag: true }, { t: "IS4", tag: true }] },
        { t: "Lokální imperfekce", i: "impLocal", o: true, sel: true, k: [impGroup("IS3"), impGroup("IS4")] },
      ] },
      { t: "Zatěžovací stavy & kombinace", i: "folderOpen", o: true, k: [
        leaf("Zatěžovací stavy", "loadCase", true), leaf("Návrhové situace", "situations", true),
        leaf("Kombinace zatížení", "combos", true), leaf("Nastavení pro statickou analýzu", "settings", true),
      ] },
      F("Generátor zatížení"),
      { t: "Zatížení", i: "folderOpen", o: true, k: [F("ZS1 - G"), F("ZS2 - L")] },
      F("Výsledky"), F("Pomocné objekty"), F("Tiskové protokoly", false),
    ],
  },
];

const Item = ({ n, level }: { n: Node; level: number }) => {
  const Li = n.sel ? Marked : "li";
  return (
    <Li role="treeitem" aria-expanded={n.o || n.x ? !!n.o : undefined} aria-selected={!!n.sel}>
      <Row $level={level}>
        <Toggle as={n.o || n.x ? "button" : "span"} aria-label={n.o ? "Sbalit" : n.x ? "Rozbalit" : undefined}>
          {(n.o || n.x) && (
            <svg viewBox="0 0 10 10">
              <path d={n.o ? "M1 3L5 7L9 3" : "M3 1L7 5L3 9"} fill="none" stroke={n.o ? "#444" : "#999"} strokeWidth="1.800" />
            </svg>
          )}
        </Toggle>
        <Label $bold={n.bold} $sel={n.sel} $child={n.tag}>
          {n.tag ? <><Tag>Lol</Tag><Swatch /></> : <Icon name={n.i!} />}
          {n.t}
        </Label>
      </Row>
      {n.k && <ul role="group">{n.k.map((k, i) => <Item key={i} n={k} level={level + 1} />)}</ul>}
    </Li>
  );
};

const DockTabs = styled.div`
  display: flex;
  align-items: flex-start;
  height: 27px;
  border: 1px solid ${c.frame};
  border-top: 0;
  &::after { content: ""; flex: 1; border-top: 1px solid ${c.frame}; }
`;
const DockTab = styled.button<{ $on?: boolean }>`
  display: grid;
  place-items: center;
  width: 39px;
  height: 24px;
  background: #ececef;
  border: 1px solid ${c.frame};
  border-left-width: 0;
  ${(p) => p.$on && css`
    height: 26px;
    background: #fff;
    border-width: 0 1px 0 0;
  `}
`;

const Work = styled.section`
  display: flex;
  flex-direction: column;
  min-width: 0;
`;
const Canvas = styled.div`
  position: relative;
  flex: 1;
  min-height: 540px;
  margin-bottom: 4px;
  padding: 4px 5px;
  background: #fff;
  p { margin: 0; line-height: 17px; }
`;
const Model = styled.svg`
  position: absolute;
  left: 341px;
  top: 113px;
  width: 180px;
  height: 400px;
`;
const Cube = styled.svg`
  position: absolute;
  right: 0;
  top: 3px;
  width: 140px;
  height: 130px;
`;

const Grid = styled.div`
  display: grid;
  grid-template-columns: minmax(0, 1fr) 17px;
  border: 1px solid ${c.frame};
`;
const TableClip = styled.div`
  overflow: hidden;
  background: #fff;
  padding-bottom: 1px;
`;
const Table = styled.table`
  table-layout: fixed;
  width: 100%;
  border-collapse: separate;
  border-spacing: 0;
  th, td {
    height: 16px;
    padding: 0 5px;
    overflow: hidden;
    line-height: 15px;
    font-weight: 400;
    text-align: left;
    white-space: nowrap;
    border-right: 1px solid #d6d6d6;
    border-bottom: 1px solid #d6d6d6;
  }
  td:nth-child(n + 7) { background: #f9faf4; }
  thead th { background: #f0f0f0; text-align: center; vertical-align: bottom; border-color: #ccc; padding: 0 2px; }
  thead td { height: 10px; line-height: 9px; background: #e0e0e0; border-color: #f5f5f5; }
  thead td:nth-child(n + 7) { background: #e0e0e0; }
  thead th.group { border-bottom: 0; }
  thead th.corner { line-height: 13px; }
  thead th.corner, tbody th { background: #e0e0e0; text-align: center; border-color: #f5f5f5; }
  tbody td.mid { text-align: center; padding: 0; }
`;
const TypeCell = styled.span`
  display: flex;
  align-items: center;
  gap: 5px;
  margin-left: -1px;
  height: 15px;
`;
const Check = styled.input`
  appearance: none;
  display: block;
  width: 13px;
  height: 13px;
  margin: 0 auto;
  border: 1px solid #222;
  background: #fff;
  &:checked::after {
    content: "";
    display: block;
    width: 9px;
    height: 5px;
    margin: 2px 1px;
    border: solid #333;
    border-width: 0 0 1px 1px;
    transform: rotate(-45deg);
  }
`;
const VScroll = styled.div`
  display: flex;
  flex-direction: column;
  justify-content: space-between;
  align-items: center;
  padding: 2px 0;
  background: #f0f0f0;
  i { width: 15px; height: 36px; background: #cdcdcd; }
`;
const HScroll = styled.div`
  display: flex;
  align-items: center;
  height: 16px;
  background: #f0f0f0;
  i { width: 64.4%; height: 15px; background: #cdcdcd; }
  button:last-child { margin-left: auto; }
`;
const ScrollBtn = styled.button`
  width: 17px;
  height: 16px;
  display: grid;
  place-items: center;
  svg { width: 10px; height: 10px; }
`;
const arrows: Record<string, string> = { up: "M1 7L5 3L9 7", down: "M1 3L5 7L9 3", left: "M7 1L3 5L7 9", right: "M3 1L7 5L3 9" };
const Scroll = ({ dir, label }: { dir: string; label: string }) => (
  <ScrollBtn aria-label={label}><svg viewBox="0 0 10 10"><path d={arrows[dir]} fill="none" stroke="#444" strokeWidth="1.900" /></svg></ScrollBtn>
);

const SheetBar = styled.div`
  display: flex;
  align-items: flex-start;
  height: 23px;
`;
const Pager = styled.div`
  display: flex;
  align-items: center;
  width: 119px;
  height: 22px;
  button { width: 17px; height: 20px; display: grid; place-items: center; }
  svg { width: 9px; height: 9px; }
  span { width: 51px; text-align: center; }
`;
const SheetTab = styled.button<{ $on?: boolean }>`
  height: ${(p) => (p.$on ? 22 : 20)}px;
  padding: 0 7px;
  white-space: nowrap;
  background: ${(p) => (p.$on ? "#fff" : "#ececef")};
  border: 1px solid ${c.frame};
  border-top: 0;
  & + & { border-left: 0; }
`;
const PageIcon = ({ d, dim }: { d: string; dim?: boolean }) => (
  <svg viewBox="0 0 9 9"><path d={d} fill={dim ? "#999" : "#444"} /></svg>
);

const Status = styled.footer`
  display: flex;
  justify-content: flex-end;
  align-items: flex-end;
  height: 23px;
`;
const Snap = styled.button<{ $on?: boolean }>`
  height: 19px;
  padding: 0 3px;
  margin: 0 1px;
  line-height: 17px;
  border: 1px solid ${(p) => (p.$on ? "#c4c4c4" : "transparent")};
  background: ${(p) => (p.$on ? "#efefef" : "none")};
`;
const StatusCell = styled.span<{ $w: number }>`
  width: ${(p) => p.$w}px;
  height: 19px;
  padding-left: 4px;
  line-height: 19px;
  white-space: nowrap;
  border-left: 1px solid #ccc;
`;
const ResizeGrip = styled.svg`
  width: 12px;
  height: 12px;
  margin: 6px 2px 0 auto;
  display: block;
`;

const menu = ["Soubor", "Úpravy", "Zobrazit", "Vložit", "Přiřadit", "Výpočet", "Výsledky", "Nástroje", "Možnosti", "Okno", "CAD-BIM", "Nápověda"];
const tableMenu = ["Přejít na", "Úpravy", "Výběr", "Zobrazit", "Nastavení"];
const columnWidths = [60, 200, 60, 110, 110, 270, 210];
const rows: { id: string; combo?: string; on?: boolean }[] = [
  { id: "IS3", combo: "1", on: true },
  { id: "IS4", combo: "2", on: true },
  { id: "IS5" },
  { id: "IS6" },
];

const CasePicker = ({ w }: { w: number }) => (
  <>
    <ComboBox $w={w}>
      <Tag>Lol</Tag>
      <Swatch />
      <select aria-label="Imperfekční stav"><option>IS3</option><option>IS4</option></select>
      <Chevron />
    </ComboBox>
    <StepBtn $dim aria-label="Předchozí stav"><Tri back /></StepBtn>
    <StepBtn aria-label="Další stav"><Tri /></StepBtn>
  </>
);

export default function App() {
  return (
    <Window>
      <Global />
      <TitleBar>
        <Icon name="app" />
        <h1>Dlubal RFEM | 6.01.0014 | 001423_Imperfektion.rf6</h1>
        <WinBtn aria-label="Minimalizovat"><svg viewBox="0 0 11 11"><path d="M0 5.500H11" stroke="#000" /></svg></WinBtn>
        <WinBtn aria-label="Maximalizovat"><svg viewBox="0 0 11 11"><path d="M.500.500H10.500V10.500H.500Z" stroke="#000" fill="none" /></svg></WinBtn>
        <WinBtn aria-label="Zavřít"><svg viewBox="0 0 11 11"><path d="M.500.500L10.500 10.500M10.500.500L.500 10.500" stroke="#000" /></svg></WinBtn>
      </TitleBar>
      <MenuBar>
        <MenuLogo><Icon name="rfem" /></MenuLogo>
        {menu.map((m) => <MenuItem key={m}>{m}</MenuItem>)}
        <License>Online License 10 | Hana Karoušová | Dlubal Software s.r.o.</License>
        <MdiBtn aria-label="Minimalizovat dokument"><svg viewBox="0 0 9 9"><path d="M1 7H7" stroke="#7b8798" strokeWidth="1.800" /></svg></MdiBtn>
        <MdiBtn aria-label="Obnovit dokument"><svg viewBox="0 0 9 9"><path d="M3 3V1H8V5.500H6M1 3.500H6V8H1Z" stroke="#7b8798" strokeWidth="1.200" fill="none" /></svg></MdiBtn>
        <MdiBtn aria-label="Zavřít dokument"><svg viewBox="0 0 9 9"><path d="M1.500 1.500L7.500 7.500M7.500 1.500L1.500 7.500" stroke="#66758a" strokeWidth="2" /></svg></MdiBtn>
      </MenuBar>

      <Toolbar>
        <Grip $first />
        <Tools items="newModel open cloudC cloudNet hand save print v report | undo w redo w | !list !grid listGrey console script listBlue # selPoly selEll selRing selLasso selPm # impNew impEdit" />
        <CasePicker w={271} />
        <Tools items="filterX v !impEye !impX loadEye loadX gridEye v resEye resX | calc abacus v # zoomX" />
        <Overflow $end aria-label="Více">»</Overflow>
      </Toolbar>
      <Toolbar $last>
        <Grip $first />
        <Tools items="node v line member v poly v | support supp2 supp3 | dimX v dimXX | surf w surf2 w opening w wing w solid | nodeLoad lineLoad memLoad solidLoad imp v nodeSup v # filterWin | rDef rMom rSurf rSol rSup rSec | r1 r2 r3 r4 r5 rNew | edit w #" />
        <ComboBox $w={131}>
          <Swatch $color="#ccffff" />
          <select aria-label="Souřadný systém"><option>1 - Globální XYZ</option></select>
          <Chevron />
        </ComboBox>
        <Tools items="axes | > # gridRuler v" />
        <Overflow $end aria-label="Více">»</Overflow>
      </Toolbar>

      <Main>
        <Dock>
          <PanelTitle><h2>Navigátor - Data</h2><PanelButtons /></PanelTitle>
          <TreeBox>
            <ul role="tree" aria-label="Navigátor">
              <li role="treeitem" aria-selected={false}>
                <Row $level={0}><Label><Icon name="rfem" />RFEM</Label></Row>
              </li>
              {tree.map((n, i) => <Item key={i} n={n} level={1} />)}
            </ul>
          </TreeBox>
          <DockTabs>
            <DockTab $on aria-label="Data"><Icon name="navData" /></DockTab>
            <DockTab aria-label="Zobrazit"><Icon name="eye" /></DockTab>
            <DockTab aria-label="Pohledy"><Icon name="camera" /></DockTab>
          </DockTabs>
        </Dock>

        <Work>
          <Canvas>
            <p>IS3</p>
            <p>Imperfekce [--]</p>
            <Model viewBox="630 220 180 400" role="img" aria-label="Sloup s imperfekcí">
              <path d="M665 336Q646.500 390 646.500 455Q648 525 665 579Z" fill="#e3efee" stroke="#4ba39c" />
              <path d="M706.500 241Q692 266 678 297V577Z" fill="#e3efee" stroke="#4ba39c" />
              <path d="M664.500 236.500L678 237.500V612L664.500 610.500Z" fill="#75c8f9" />
              <path d="M664.500 236.500L672 235L685.500 235.500V609.500L678 612V237.500Z" fill="#75c8f9" />
              <path d="M678 297L685.500 281.500V491L678 577Z" fill="#66bde9" />
              <path d="M685.500 235.500V609.500M664.500 237V610" stroke="#b4dcf7" strokeWidth=".7" />
              <path d="M662 611L665 609.500V611L678 612.500L685 609.500H688L685 612.500L676 614.500L663 613Z" fill="#3fcf57" />
              <path d="M706.500 241L678.500 576" stroke="#12807c" strokeWidth="1.300" />
              <path d="M706.500 241Q692 266 678 297" fill="none" stroke="#2f908d" />
              <path d="M680 236.500L706 240.500M649 420.500L664 422.500M678 424.500L690 426.500" stroke="#0f7f7b" strokeDasharray="1 1" />
              <path d="M672 233.500L676 233L678.500 234.500V238L673 237Z" fill="#e81010" />
              <g fill="#0f9996" fontFamily="Open Sans" fontSize="11">
                <text x="707" y="236">Φ<tspan dy="2">0</tspan><tspan dy="-2"> = 1/200.000</tspan></text>
                <text x="651" y="416">e<tspan dy="2">0</tspan><tspan dy="-2"> = 1/150.000</tspan></text>
              </g>
            </Model>
            <Cube viewBox="0 0 420 390" role="img" aria-label="Orientace pohledu">
              <path d="M72 105L172 58L355 85L252 132Z" fill="#858383" />
              <path d="M72 105L252 132L250 332L72 305Z" fill="#cacaca" />
              <path d="M252 132L355 85L353 286L250 332Z" fill="#a3a3a3" />
              <path d="M252 132L276 122L274 320L250 332Z" fill="#b2b2b2" />
              <g fill="none" stroke="#7b7676" strokeWidth="6">
                <path d="M72 156L252 183L355 137M72 254L250 281L353 238M117 112V312M206 125V325M252 132L250 332M277 121L275 320M329 97V298" />
                <path d="M72 107L252 132L355 85" strokeWidth="4" />
              </g>
              <g fill="none" stroke="#6d6969" strokeWidth="6"><path d="M117 112L217 66M206 125L306 78M98 93L280 119M142 73L327 98" /></g>
              <path d="M72 105L172 58L355 85L353 286L250 332L72 305Z" fill="none" stroke="#777" strokeWidth="3" strokeLinejoin="round" />
              <g fontFamily="Open Sans" fontWeight="700" fontSize="40">
                <text x="136" y="237" fill="#32c332">+Y</text>
                <text x="284" y="226" fontSize="32" fill="#dc3838">-X</text>
                <path d="M190 102L212 97L236 100L222 101L210 105Z" fill="#33357a" />
              </g>
            </Cube>
          </Canvas>

          <PanelTitle><h2>Imperfekční stavy</h2><PanelButtons /></PanelTitle>
          <MenuBar>{tableMenu.map((m) => <MenuItem key={m}>{m}</MenuItem>)}</MenuBar>
          <Toolbar $last>
            <ComboBox $w={132}>
              <Icon name="tabIcon" />
              <select aria-label="Tabulka"><option>Imperfekce</option></select>
              <Chevron />
            </ComboBox>
            <StepBtn aria-label="Předchozí tabulka"><Tri back /></StepBtn>
            <StepBtn aria-label="Další tabulka"><Tri /></StepBtn>
            <Sep /><Sep $tight />
            <CasePicker w={202} />
            <Tools items="| impNew impEdit | !syncA !syncB | tRows tLine tPlus tStar tDots | tDel | rowA rowX rowL rowR | tView | abEq fx fxX fxEye | excel | handPanel" />
            <Sep $tight />
            <Tools items="decimals" />
          </Toolbar>
          <Grid>
            <TableClip>
              <Table>
                <colgroup>
                  {columnWidths.map((w, i) => <col key={i} style={{ width: w }} />)}
                  <col />
                </colgroup>
                <thead>
                  <tr>{Array.from({ length: 8 }, (_, i) => <td key={i} />)}</tr>
                  <tr>
                    <th rowSpan={2} className="corner">Imperf.<br />stav</th>
                    <th rowSpan={2}>Název imperfekčního stavu</th>
                    <th rowSpan={2}>Je aktivní</th>
                    <th colSpan={2} className="group">Přiřazeno k</th>
                    <th rowSpan={2}>Typ imperfekce</th>
                    <th rowSpan={2}>Typ zdroje</th>
                    <th rowSpan={2} />
                  </tr>
                  <tr><th>Zatěžovací stavy</th><th>Kombinace zatížení</th></tr>
                </thead>
                <tbody>
                  {rows.map((r) => (
                    <tr key={r.id}>
                      <th scope="row">{r.id}</th>
                      <td />
                      <td className="mid">{r.on && <Check type="checkbox" defaultChecked aria-label={`${r.id} je aktivní`} />}</td>
                      <td />
                      <td>{r.combo}</td>
                      <td>{r.on && <TypeCell><Tag>Lol</Tag>Lokální imperfekce</TypeCell>}</td>
                      <td />
                      <td />
                    </tr>
                  ))}
                </tbody>
              </Table>
            </TableClip>
            <VScroll><Scroll dir="up" label="Nahoru" /><i /><Scroll dir="down" label="Dolů" /></VScroll>
            <HScroll><Scroll dir="left" label="Vlevo" /><i /><Scroll dir="right" label="Vpravo" /></HScroll>
          </Grid>
          <SheetBar>
            <Pager>
              <button aria-label="První"><PageIcon dim d="M1 1H2.500V8H1ZM8 1V8L3 4.500Z" /></button>
              <button aria-label="Předchozí"><PageIcon dim d="M7 1V8L2 4.500Z" /></button>
              <span>1 z 3</span>
              <button aria-label="Další"><PageIcon d="M2 1V8L7 4.500Z" /></button>
              <button aria-label="Poslední"><PageIcon d="M1 1V8L6 4.500ZM6.500 1H8V8H6.500Z" /></button>
            </Pager>
            <SheetTab $on>Imperfekční stavy</SheetTab>
            <SheetTab>Imperfekce prutů</SheetTab>
            <SheetTab>Imperfekce sad prutů</SheetTab>
          </SheetBar>
        </Work>
      </Main>

      <Status>
        <Snap $on>ÚCHOP</Snap>
        <Snap>RASTR</Snap>
        <Snap>LRASTR</Snap>
        <Snap $on>OUCHOP</Snap>
        <StatusCell $w={103} />
        <StatusCell $w={106} />
        <StatusCell $w={156}>SS: Globální XYZ</StatusCell>
        <StatusCell $w={66}>Rovina: XY</StatusCell>
        <StatusCell $w={76} />
        <StatusCell $w={76} />
        <StatusCell $w={76} />
        <StatusCell $w={19}>
          <ResizeGrip viewBox="0 0 12 12" aria-hidden="true"><path d="M8 1H10V3H8ZM8 5H10V7H8ZM8 9H10V11H8ZM4 5H6V7H4ZM4 9H6V11H4ZM0 9H2V11H0Z" fill="#b5b5b5" /></ResizeGrip>
        </StatusCell>
      </Status>
    </Window>
  );
}
